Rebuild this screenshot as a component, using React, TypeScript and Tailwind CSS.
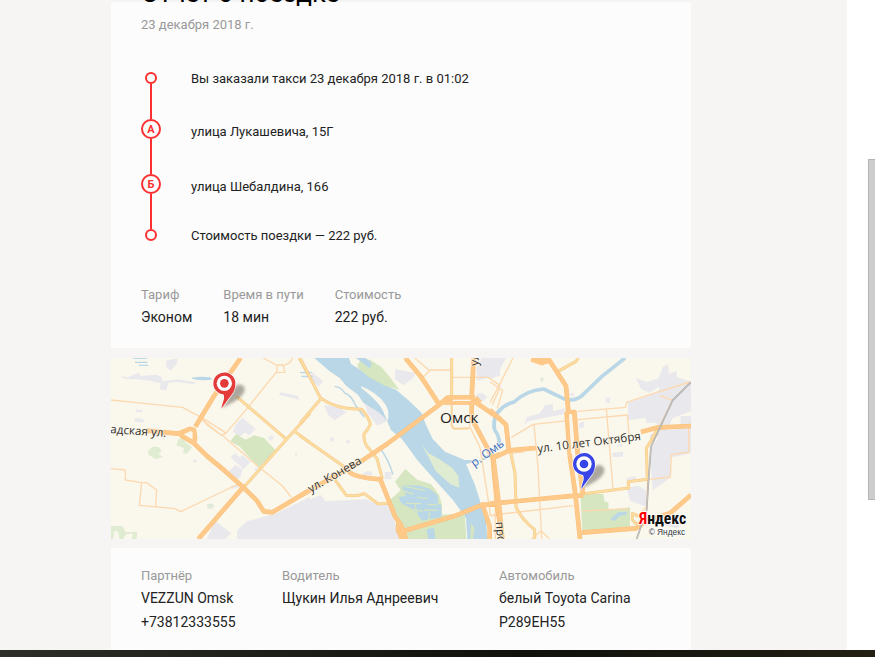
type Area = { fill: string; d: string };
type Tile = {
  shift: string;
  areas: Area[];
  creeks: string[];
  thin: string[];
  medium: string[];
  major: string[];
};

const LAND = "#faf7ec";
const GREY = "#e9e8ec";
const GREEN = "#d5e6c0";
const PALE = "#e0ecd2";
const WATER = "#b9d7e6";

const tiles: Tile[] = [
  {
    shift: "translate(-3 -24)",
    areas: [
      { fill: GREY, d: "M168 32L203 24L201 40L183 61L170 54Z" },
      { fill: GREY, d: "M30 78L55 82L85 68L92 78L140 74L156 82V94L205 88L255 97V103L204 96L175 98L168 121L150 118L152 100L120 92L80 88L45 86Z" },
      { fill: WATER, d: "M246 83Q270 78 300 82L308 88Q280 94 246 86Z" },
      { fill: GREY, d: "M512 127L565 138L568 150L545 143L508 134Z" },
      { fill: GREY, d: "M397 203L437 236L418 256L405 248L388 260L368 244L380 220Z" },
      { fill: GREEN, d: "M378 252L407 269L432 256L462 264L498 302L447 352L412 316L390 290L361 274Z" },
      { fill: GREY, d: "M474 263L484 255L493 262L483 273Z" },
      { fill: GREY, d: "M374 309L388 322L398 316L420 335L401 358L362 322Z" },
      { fill: GREY, d: "M376 345L398 358L390 385L372 384L356 365Z" },
      { fill: GREY, d: "M77 178L97 180V187L77 185ZM74 207L86 203L103 210V217L74 216Z" },
      { fill: PALE, d: "M113 306Q125 286 140 291Q152 290 154 305L145 311L158 321L138 328L117 315Z" },
      { fill: PALE, d: "M205 268L219 263L226 277L246 292L230 312L219 308L222 294L199 286Z" },
      { fill: "#e0eadd", d: "M290 465Q302 456 312 466Q308 482 293 475Z" },
      { fill: PALE, d: "M3 528H36L48 547L82 545L80 567H3Z" },
      { fill: LAND, d: "M12 545Q25 535 29 567H10ZM47 553L68 551L66 567H40Z" },
      { fill: GREY, d: "M315 512L363 550L345 567H290Z" },
      { fill: GREY, d: "M382 540L412 514L500 490L600 440V567H380Z" },
      { fill: GREY, d: "M248 333L256 328L261 333L254 338ZM484 151L490 147L492 151ZM555 310L561 308V317H556ZM362 408L383 402L386 413L366 416ZM432 357L443 351L440 365Z" },
    ],
    creeks: ["M70 25H110", "M75 37H112", "M87 46H114", "M570 68H600", "M578 80H600"],
    thin: [
      "M3 150L80 158L218 172L278 205L285 216L330 252",
      "M274 202L346 247L336 257L290 224L275 206",
      "M340 259L445 350L518 408L543 441",
      "M344 254L406 182L414 172L500 65L503 45H519L525 67L499 68",
      "M460 24L502 47M520 48L540 37L548 24",
      "M3 356L46 360V390L95 398L110 398L140 420L137 469",
      "M95 398L88 466L195 476L212 485L385 402",
    ],
    medium: ["M380 140L530 269", "M400 413L528 270L600 190", "M550 241L600 278", "M568 24L600 83"],
    major: [
      "M392 24L312 138L256 230",
      "M110 242L205 251L240 237L252 240L255 265L252 280L211 255",
      "M252 280L293 320L344 362L398 410L440 451L461 484L487 487L600 420",
      "M398 413L265 567",
    ],
  },
  {
    shift: "translate(567 -24)",
    areas: [
      { fill: GREY, d: "M35 65L70 94L55 110L28 84Z" },
      { fill: GREY, d: "M72 165L115 170L140 186L104 211L85 195Z" },
      { fill: GREY, d: "M192 152L240 170L268 210L232 227L203 190Z" },
      { fill: GREY, d: "M286 58L345 68L340 83L311 106L284 88Z" },
      { fill: GREY, d: "M530 52L545 24H600V78L574 80L530 93Z" },
      { fill: GREY, d: "M529 132L545 128L562 140L548 155H528Z" },
      { fill: GREY, d: "M0 460L63 435L76 454L201 448L235 466L267 466L300 567H0Z" },
      { fill: GREY, d: "M188 370L203 363L215 366V377L188 375ZM254 366H275L274 388H254ZM89 265L97 261L104 270L95 276ZM138 272L147 269L151 278L143 281Z" },
      { fill: WATER, d: "M43 24H147L153 42L205 75L250 103L289 120L331 156L365 189L378 225L398 267L435 305L494 330H542L559 315L560 328L498 342L525 405L543 462L556 485L562 567H502L498 505L459 450L400 385L350 328L306 267L273 240L260 210L236 187L190 158L174 134L139 108L120 85L89 64Z" },
      { fill: LAND, d: "M183 109Q229 125 257 164Q270 184 263 214L253 193Q244 160 183 113Z" },
      { fill: GREEN, d: "M190 24L212 31L244 51L274 87L298 119L255 107L206 81L173 53L174 41Z" },
      { fill: WATER, d: "M168 24H197L216 40L210 56Z" },
      { fill: PALE, d: "M366 284L385 309L417 327L457 354L475 378L478 413L451 403L407 363Z" },
      { fill: GREEN, d: "M316 357L352 389L393 402L417 434L426 464V494L494 492L499 567H323L298 514L270 450L302 421L285 395Z" },
      { fill: WATER, d: "M303 405L360 407L389 416L414 437V462L424 465V501L367 512L342 480L304 460L296 441L318 438Z" },
      { fill: WATER, d: "M380 538L402 533L406 567H384Z" },
      { fill: GREEN, d: "M513 519L523 535L519 567H511Z" },
    ],
    creeks: ["M104 110Q122 109 134 129Q154 136 166 165L192 201", "M242 297Q266 330 279 374", "M9 67H34", "M4 79H38", "M600 178Q576 194 580 234Q599 251 594 288L556 323"],
    thin: [
      "M344 24L389 62L367 83M389 60H450M455 82H565L600 107",
      "M514 170L509 230L540 292L567 465L586 468V567",
      "M600 112L577 165",
      "M568 469L571 497H600",
    ],
    medium: [
      "M0 24L62 145Q110 179 185 178Q208 205 211 223Q206 237 192 252Q190 270 199 286L231 326L247 387",
      "M62 147L0 220",
      "M0 257L121 342L166 378",
      "M104 388L139 436Q169 440 193 431L235 462L269 460",
      "M455 24V143",
    ],
    major: [
      "M0 437L191 329L261 282L413 168L442 143L525 142",
      "M316 24L364 82L415 160",
      "M521 24L515 143",
      "M430 157H527L600 207M526 143L540 158M515 160V205L571 311L580 328",
      "M146 365Q165 383 241 388L285 499L303 525L318 567",
      "M600 312L579 323L582 367L594 488L600 520",
      "M303 545L461 499L548 464H600",
      "M548 465L569 530V567",
      "M295 518L294 540L306 567",
    ],
  },
  {
    shift: "translate(1137 -24)",
    areas: [
      { fill: GREY, d: "M0 24H48L18 80L0 88Z" },
      { fill: GREY, d: "M438 85L470 96L505 86L519 50L535 43V71L560 63V81L603 95V183L548 204L527 249L480 272V254L515 237L497 218L471 219L465 204L414 211V158L467 140L507 121V110L479 128L454 118Z" },
      { fill: GREY, d: "M572 198H603V310L540 323V384L488 420L479 300L520 241L570 237Z" },
      { fill: GREY, d: "M110 202L150 190L165 166L188 162L190 184L226 174L220 192L193 198L115 213L103 224Z" },
      { fill: GREY, d: "M347 145L360 142V158H348ZM233 133L250 128L255 140ZM267 220L282 215V231L267 236ZM367 309L399 305V320L367 321ZM410 385L438 377V394H410ZM380 289L391 280L400 289ZM17 110L33 103L29 120Z" },
      { fill: GREY, d: "M410 413L445 407L470 423V470L420 452ZM522 508L558 492L591 514L560 534L522 526Z" },
      { fill: GREEN, d: "M271 432H340L344 455L355 457L356 480L420 472V536L277 542Z" },
      { fill: WATER, d: "M361 508L384 487L410 486V494L389 498L373 514Z" },
      { fill: "#e4eade", d: "M149 86Q157 76 164 88L154 97Z" },
    ],
    creeks: [],
    thin: [
      "M69 24L33 95L0 158M0 96L38 121L22 175",
      "M64 262L130 223L240 211L412 195L417 252",
      "M263 184L407 172L410 157L470 137L600 96",
      "M132 224L144 350L155 567M349 177L369 415",
      "M510 136L548 151L537 173L488 270",
      "M60 311L104 305M596 232V306L544 314L541 381L473 389L470 470L445 495",
      "M0 496L250 467M125 567L153 542L178 567M276 483L416 476",
    ],
    medium: [
      "M203 65L258 34L265 24",
      "M62 308L75 370L78 470Q92 506 134 539V567",
      "M282 431L416 414L415 395L472 388L469 294L482 274L501 239",
      "M449 500L427 490V510L440 523L461 509",
    ],
    major: [
      "M125 24L155 35L178 31L228 108L235 184L230 190L240 322L256 431L270 567",
      "M231 186H253L263 310L279 434",
      "M0 180L48 224L57 302L10 324L28 475L37 567",
      "M57 301L138 294M453 246L500 233L603 228",
      "M0 461L256 437H280",
      "M276 548L438 535L470 512L540 490L603 435",
    ],
  },
];

function Pin({ x, y, color }: { x: number; y: number; color: string }) {
  return (
    <g transform={`translate(${x} ${y})`}>
      <path d="M-8 75L18 30Q36 -8 58 8Q70 28 32 53Z" fill="#5e5a52" opacity="0.5" filter="url(#soft)" />
      <path
        d="M-9 76C-5 55 3 46 -3 33A33 33 0 1 1 33 2C33 24 22 34 12 47Z"
        fill={color}
        stroke="#fff"
        strokeWidth="4"
        paintOrder="stroke"
      />
      <circle r="23" fill="#fff" />
      <circle r="13" fill={color} />
    </g>
  );
}

function CityMap() {
  return (
    <svg
      viewBox="0 0 1740 543"
      preserveAspectRatio="xMidYMid slice"
      className="mt-2.5 mb-[9px] block h-[181px] w-full shrink-0"
      role="img"
      aria-label="Карта поездки"
    >
      <defs>
        <filter id="soft" x="-50%" y="-50%" width="200%" height="200%">
          <feGaussianBlur stdDeviation="5" />
        </filter>
      </defs>
      <rect width="1740" height="543" fill={LAND} />
      {tiles.map((t) => (
        <g key={t.shift} transform={t.shift}>
          {t.areas.map((a) => (
            <path key={a.d} d={a.d} fill={a.fill} />
          ))}
        </g>
      ))}
      <g transform="translate(1137 -24)" fill="none" stroke={WATER}>
        <path
          d="M28 290Q31 262 14 240Q7 200 30 180Q45 163 72 156Q110 120 162 117L205 138Q243 162 276 137L335 80L405 24"
          strokeWidth="11"
        />
      </g>
      <g transform="translate(567 -24)" fill="none" stroke={GREEN} strokeWidth="4">
        <path d="M303 407L375 421M303 421L340 432M318 460L363 461M340 478L369 484M352 442L383 446M383 463L410 465M372 480L413 481M389 487L386 512M345 463L352 500" />
      </g>
      {tiles.map((t) => (
        <g key={t.shift} transform={t.shift} fill="none" strokeLinejoin="round">
          <path d={t.creeks.join("")} stroke={WATER} strokeWidth="4" />
          <path d={t.thin.join("")} stroke="#fcd9b0" strokeWidth="4" />
          <path d={t.medium.join("")} stroke="#f3c98a" strokeWidth="9" />
          <path d={t.medium.join("")} stroke="#fddc9f" strokeWidth="6" />
        </g>
      ))}
      <path
        transform="translate(567 -24)"
        d="M455 165V225Q457 237 469 236L508 235"
        fill="none"
        stroke="#f8d49c"
        strokeWidth="6"
      />
      {tiles.map((t) => (
        <g key={t.shift} transform={t.shift} fill="none" strokeLinejoin="round">
          <path d={t.major.join("")} stroke="#fac07c" strokeWidth="14" />
          <path d={t.major.join("")} stroke="#ffc98a" strokeWidth="11" />
        </g>
      ))}
      <g transform="translate(567 -24)">
        <path d="M458 151H512" stroke={LAND} strokeWidth="4" />
      </g>
      <g transform="translate(-3 -24)">
        <path d="M239 243L248 246L247 262L232 254Z" fill={LAND} />
      </g>
      <g transform="translate(1137 -24)" fill="none">
        <path d="M603 96L548 151L483 290L475 400L470 480L440 567" stroke="#aaa8a4" strokeWidth="5" />
        <path d="M603 96L548 151L483 290L475 400L470 480L440 567" stroke="#d2d0cc" strokeWidth="2" />
        <path d="M241 193L247 310" stroke={LAND} strokeWidth="7" />
        <path d="M125 24L155 35L178 28" stroke="#ffc98a" strokeWidth="22" />
      </g>
      <g
        className="font-['Open_Sans','Noto_Sans',sans-serif]"
        fill="#33312e"
        stroke="#fbf8ecb0"
        strokeWidth="5"
        paintOrder="stroke"
        fontSize="35"
        fontWeight="500"
      >
        <text transform="translate(-3 225) rotate(4)">адская ул.</text>
        <text transform="translate(599 405) rotate(-30)">ул. Конева</text>
        <text transform="translate(1280 284) rotate(-7)">ул. 10 лет Октября</text>
        <text transform="translate(1154 492) rotate(85)">проспект</text>
        <text transform="translate(1102 24) rotate(-87)">ул.</text>
        <text transform="translate(1090 328) rotate(-36)" fill="#3a6cc0">
          р. Омь
        </text>
        <text x="987" y="195" fontSize="46" fill="#1c1c1c">
          Омск
        </text>
      </g>
      <Pin x={340} y={76} color="#e33a3a" />
      <Pin x={1419} y={318} color="#3a45e8" />
      <g stroke="#fff" strokeWidth="5" paintOrder="stroke" fill="#111">
        <text
          x="1584"
          y="497"
          fontSize="47"
          fontWeight="700"
          className="font-['Liberation_Sans_Narrow','Roboto_Condensed','Open_Sans_Condensed','Roboto',sans-serif]"
        >
          <tspan fill="#f00">Я</tspan>ндекс
        </text>
        <text x="1613" y="530" fontSize="25" fill="#333" className="font-['Liberation_Sans',sans-serif]">
          © Яндекс
        </text>
      </g>
    </svg>
  );
}

const stops = [
  { text: "Вы заказали такси 23 декабря 2018 г. в 01:02" },
  { letter: "А", text: "улица Лукашевича, 15Г" },
  { letter: "Б", text: "улица Шебалдина, 166" },
  { text: "Стоимость поездки — 222 руб." },
];

function Route() {
  return (
    <ol className="mt-9 text-[13px]">
      {stops.map((stop, i) => (
        <li key={stop.text} className="flex gap-[30px]">
          <div className="flex w-5 flex-col items-center">
            {stop.letter ? (
              <span className="flex size-5 items-center justify-center rounded-full border-2 border-[#fc3030] text-[11px] leading-none font-bold text-[#fc3030]">
                {stop.letter}
              </span>
            ) : (
              <span className="size-3 rounded-full border-2 border-[#fc3030]" />
            )}
            {i < stops.length - 1 && <span className="h-[35px] w-0.5 bg-[#fc3030]" />}
          </div>
          <p className={stop.letter ? "leading-[26px]" : "leading-[14px]"}>{stop.text}</p>
        </li>
      ))}
    </ol>
  );
}

function Fact({ label, values }: { label: string; values: string[] }) {
  return (
    <div>
      <dt className="text-[13px] leading-5 text-[#999]">{label}</dt>
      {values.map((v) => (
        <dd key={v} className="text-sm leading-6">
          {v}
        </dd>
      ))}
    </div>
  );
}

export default function App() {
  return (
    <div className="flex h-screen flex-col overflow-hidden bg-white font-['Roboto',sans-serif] text-[#222]">
      <div className="flex min-h-0 flex-1">
        <main className="flex min-w-0 flex-1 flex-col overflow-hidden bg-[#f6f5f3] pr-[156px] pl-[111px]">
          <section className="h-[348px] shrink-0 bg-[#fcfcfc] px-[30px] shadow-[inset_0_3px_3px_-2px_#00000010]">
            <h1 className="-mt-[22px] text-[26px] leading-[30px] text-black">Отчёт о поездке</h1>
            <p className="mt-1.5 text-[13px] leading-[22px] text-[#999]">23 декабря 2018 г.</p>
            <Route />
            <dl className="mt-[42px] flex gap-[31px]">
              <Fact label="Тариф" values={["Эконом"]} />
              <Fact label="Время в пути" values={["18 мин"]} />
              <Fact label="Стоимость" values={["222 руб."]} />
            </dl>
          </section>
          <CityMap />
          <section className="flex-1 bg-[#fcfcfc] px-[30px] pt-[18px]">
            <dl className="grid grid-cols-[141px_217px_1fr]">
              <Fact label="Партнёр" values={["VEZZUN Omsk", "+73812333555"]} />
              <Fact label="Водитель" values={["Щукин Илья Аднреевич"]} />
              <Fact label="Автомобиль" values={["белый Toyota Carina", "Р289ЕН55"]} />
            </dl>
          </section>
        </main>
        <div className="w-7 bg-white pt-[159px] pl-[21px]">
          <div className="h-[341px] border border-r-0 border-[#b4b4b4] bg-[#cdcdcd]" />
        </div>
      </div>
      <div className="h-[7px] shrink-0 bg-linear-to-r from-[#2d2e29] via-[#10110d] via-60% to-[#231f12]" />
    </div>
  );
}
